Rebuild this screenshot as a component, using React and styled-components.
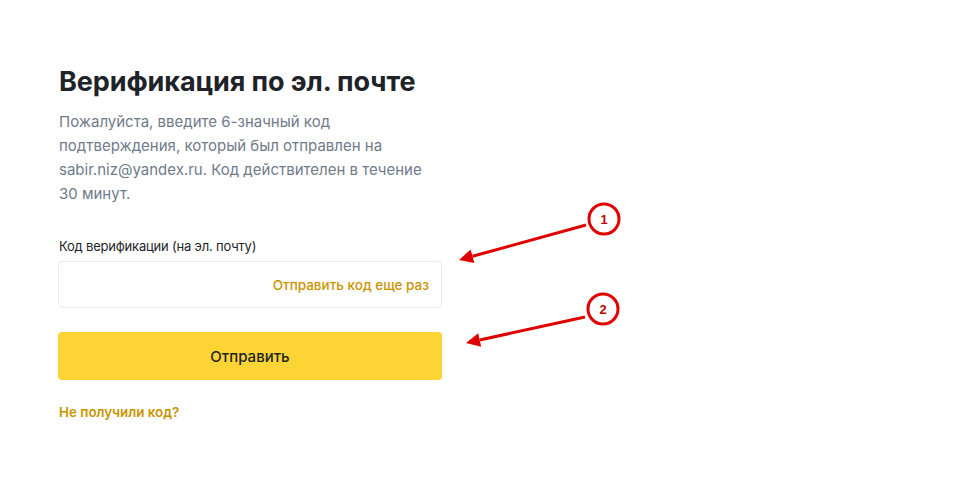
import React from "react";
import styled, { createGlobalStyle } from "styled-components";

const Global = createGlobalStyle`
  html, body { margin: 0; padding: 0; background: #fff; }
  body { font-family: "Inter", "Noto Sans", sans-serif; }
`;

const Page = styled.div`
  position: relative;
  width: 963px;
  height: 498px;
  box-sizing: border-box;
  padding: 64px 0 0 58px;
`;

const Form = styled.div`
  width: 384px;
  display: flex;
  flex-direction: column;
`;

const Title = styled.h1`
  margin: 0 0 10px 1px;
  font-size: 27px;
  line-height: 36px;
  font-weight: 700;
  color: #1e2329;
  letter-spacing: -0.1px;
`;

const Desc = styled.p`
  margin: 0 0 31px 1px;
  width: 370px;
  font-size: 15px;
  line-height: 24px;
  color: #707a8a;
`;

const Label = styled.div`
  font-size: 13px;
  line-height: 18px;
  letter-spacing: -0.2px;
  color: #1e2329;
  margin: 0 0 6px 1px;
`;

const InputBox = styled.div`
  height: 47px;
  box-sizing: border-box;
  border: 1px solid #eaecef;
  border-radius: 4px;
  display: flex;
  align-items: center;
  justify-content: flex-end;
  padding: 0 12px;
`;

const Link = styled.span`
  font-size: 13.5px;
  font-weight: 500;
  color: #c99400;
`;

const Button = styled.button`
  margin-top: 24px;
  height: 48px;
  border: none;
  border-radius: 4px;
  background: #fcd535;
  color: #1e2329;
  font-family: inherit;
  font-size: 15px;
  font-weight: 500;
`;

const Bottom = styled.div`
  margin-top: 24px;
  margin-left: 1px;
  font-size: 13.4px;
  font-weight: 600;
  color: #c99400;
`;

const Overlay = styled.svg`
  position: absolute;
  left: 0;
  top: 0;
  pointer-events: none;
`;

function Callout({ cx, cy, n, x1, y1, x2, y2 }) {
  const ang = Math.atan2(y2 - y1, x2 - x1);
  const len = 14;
  const w = 7;
  const bx = x2 - len * Math.cos(ang);
  const by = y2 - len * Math.sin(ang);
  const px = -Math.sin(ang) * w;
  const py = Math.cos(ang) * w;
  return (
    <g>
      <circle cx={cx} cy={cy} r={15} fill="#fff" stroke="#e00000" strokeWidth="3" />
      <text x={cx} y={cy + 5} textAnchor="middle" fontSize="13" fontWeight="700" fill="#c00000" fontFamily="Liberation Sans, Arial, sans-serif">{n}</text>
      <line x1={x1} y1={y1} x2={bx} y2={by} stroke="#e00000" strokeWidth="3" />
      <polygon points={`${x2},${y2} ${bx + px},${by + py} ${bx - px},${by - py}`} fill="#e00000" />
    </g>
  );
}

export default function App() {
  return (
    <>
      <Global />
      <Page>
        <Form>
          <Title>Верификация по эл. почте</Title>
          <Desc>
            Пожалуйста, введите 6-значный код подтверждения, который был отправлен на sabir.niz@yandex.ru. Код действителен в течение 30 минут.
          </Desc>
          <Label>Код верификации (на эл. почту)</Label>
          <InputBox>
            <Link>Отправить код еще раз</Link>
          </InputBox>
          <Button>Отправить</Button>
          <Bottom>Не получили код?</Bottom>
        </Form>
        <Overlay width="963" height="498">
          <Callout cx={604} cy={219} n="1" x1={586} y1={225} x2={459} y2={260} />
          <Callout cx={603} cy={309} n="2" x1={585} y1={317} x2={466} y2={343} />
        </Overlay>
      </Page>
    </>
  );
}
